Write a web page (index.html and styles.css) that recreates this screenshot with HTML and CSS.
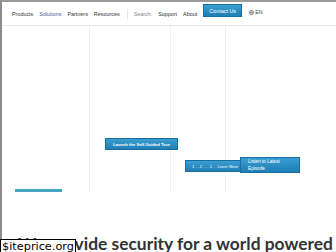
FILE: index.html
```html
<!DOCTYPE html>
<html lang="en">
<head>
	<meta charset="UTF-8">
	<meta name="viewport" content="width=device-width, initial-scale=1.0">
	<title>Security for a world powered by applications</title>
	<link rel="stylesheet" href="styles.css">
</head>
<body>
	<div class="page">
		<div class="nav">
			<a href="#" class="nav-link">Products</a>
			<a href="#" class="nav-link visited">Solutions</a>
			<a href="#" class="nav-link">Partners</a>
			<a href="#" class="nav-link">Resources</a>
			<span class="nav-sep"></span>
			<span class="nav-search">Search:</span>
			<a href="#" class="nav-link">Support</a>
			<a href="#" class="nav-link">About</a>
			<a href="#" class="nav-contact">Contact Us</a>
			<span class="nav-lang">
				<svg class="globe" viewBox="0 0 10 10" width="5" height="5">
					<circle cx="5" cy="5" r="4.2" fill="none" stroke="#555" stroke-width="1.2"/>
					<path d="M1 5h8M5 1c-2 2.5-2 5.5 0 8M5 1c2 2.5 2 5.5 0 8" fill="none" stroke="#555" stroke-width="0.9"/>
				</svg>
				EN
			</span>
		</div>
		<div class="hero">
			<div class="col col-1">
				<span class="accent-bar"></span>
			</div>
			<div class="col col-2">
				<a href="#" class="btn btn-tour">Launch the Self-Guided Tour</a>
			</div>
			<div class="col col-3">
				<a href="#" class="btn btn-more">1 . . 2 . . . 1 . . Learn More</a>
			</div>
			<div class="col col-4">
				<a href="#" class="btn btn-listen">Listen to Latest<br>Episode</a>
			</div>
		</div>
		<h1 class="headline">We provide security for a world powered</h1>
	</div>
	<div class="watermark">$iteprice.org</div>
</body>
</html>
```

FILE: styles.css
```css
body {
	background-color: #fff;
	color: #333;
	font-family: "Liberation Sans", Arial, sans-serif;
	margin: 0;
	padding: 0;
	overflow: hidden;
}

.page {
	border-top: 2px solid #9a9a9a;
	border-left: 2px solid #8c8c8c;
	height: 250px;
	overflow: hidden;
}

.nav {
	display: flex;
	align-items: center;
	height: 23px;
	padding-left: 10px;
	border-bottom: 1px solid #e6e6e6;
	font-size: 5.4px;
}
.nav-link {
	color: #333;
	text-decoration: none;
	margin-right: 6px;
}
.visited {
	color: #55559a;
}
.nav-sep {
	width: 1px;
	height: 10px;
	background-color: #e4e4e4;
	margin: 0 6px 0 1px;
}
.nav-search {
	color: #888;
	margin-right: 6px;
}
.nav-contact {
	display: flex;
	align-items: center;
	justify-content: center;
	width: 39px;
	height: 13px;
	margin: -6px 7px 0 0;
	background: linear-gradient(#3a9ed2, #1f7eb6);
	border: 1px solid #1b6d9f;
	box-sizing: border-box;
	color: #fff;
	text-decoration: none;
}
.nav-lang {
	display: flex;
	align-items: center;
	gap: 1px;
	color: #444;
	margin-top: -3px;
}

.hero {
	display: grid;
	grid-template-columns: 88px 81px 55px 1fr;
	height: 166px;
}
.col {
	display: flex;
	flex-direction: column;
	align-items: flex-start;
	border-right: 1px solid #f0f0f0;
}
.col-4 {
	border-right: none;
}

.accent-bar {
	flex-shrink: 0;
	width: 47px;
	height: 3px;
	margin: 163px 0 0 13px;
	background-color: #45a7c4;
}

.btn {
	flex-shrink: 0;
	display: flex;
	align-items: center;
	box-sizing: border-box;
	background: linear-gradient(#3a9ed2, #1f7eb6);
	border: 1px solid #1b6d9f;
	color: #fff;
	text-decoration: none;
	font-size: 4.4px;
	position: relative;
}
.btn-tour {
	justify-content: center;
	width: 73px;
	height: 12px;
	margin: 112px 0 0 15px;
	font-weight: 700;
	font-size: 4.2px;
}
.btn-more {
	width: 56px;
	height: 12px;
	margin: 134px 0 0 14px;
	padding-left: 6px;
	font-size: 4px;
	white-space: nowrap;
}
.btn-listen {
	width: 60px;
	height: 16px;
	margin: 131px 0 0 14px;
	padding-left: 7px;
	font-size: 4.7px;
	line-height: 7px;
}

.headline {
	font-family: Lato, "Liberation Sans", sans-serif;
	font-weight: 700;
	font-size: 17.4px;
	line-height: 23px;
	color: #333;
	margin: 40px 0 0 16px;
	white-space: nowrap;
}

.watermark {
	position: absolute;
	left: 0;
	top: 239px;
	padding: 0 1px;
	background-color: #fff;
	border: 1px solid #000;
	font-family: "DejaVu Sans", sans-serif;
	font-size: 11.3px;
	line-height: 13px;
	color: #000;
}
```
